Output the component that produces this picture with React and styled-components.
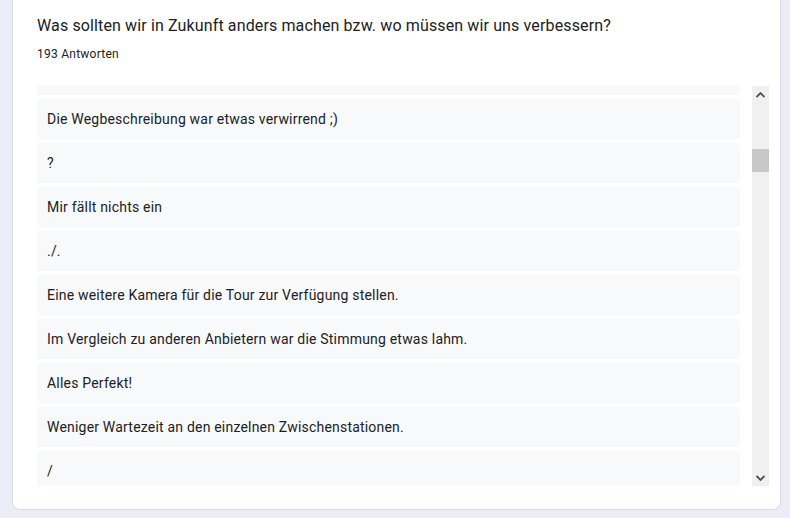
import React from "react";
import styled, { createGlobalStyle } from "styled-components";

// first entry is scrolled mostly out of view, only its bottom edge shows
const answers = [
  "",
  "Die Wegbeschreibung war etwas verwirrend ;)",
  "?",
  "Mir fällt nichts ein",
  "./.",
  "Eine weitere Kamera für die Tour zur Verfügung stellen.",
  "Im Vergleich zu anderen Anbietern war die Stimmung etwas lahm.",
  "Alles Perfekt!",
  "Weniger Wartezeit an den einzelnen Zwischenstationen.",
  "/",
];

function App() {
  return (
    <>
      <GlobalStyle />
      <Page>
        <Card>
          <Title>Was sollten wir in Zukunft anders machen bzw. wo müssen wir uns verbessern?</Title>
          <Count>193 Antworten</Count>
          <ScrollArea>
            <Viewport>
              <List>
                {answers.map((text, i) => (
                  <Answer key={i}>{text}</Answer>
                ))}
              </List>
            </Viewport>
            <Scrollbar>
              <ArrowButton>
                <svg width="9" height="6" viewBox="0 0 9 6">
                  <path d="M0.5 5 L4.5 1 L8.5 5" fill="none" stroke="#505050" strokeWidth="1.8" />
                </svg>
              </ArrowButton>
              <Track>
                <Thumb offset={46} size={23} />
              </Track>
              <ArrowButton>
                <svg width="9" height="6" viewBox="0 0 9 6">
                  <path d="M0.5 1 L4.5 5 L8.5 1" fill="none" stroke="#505050" strokeWidth="1.8" />
                </svg>
              </ArrowButton>
            </Scrollbar>
          </ScrollArea>
        </Card>
      </Page>
    </>
  );
}

const GlobalStyle = createGlobalStyle`
  body {
    margin: 0;
    background: #eaedf7;
    font-family: Roboto, "Liberation Sans", sans-serif;
  }
`;

const Page = styled.div`
  padding: 0 9px 8px 12px;
`;

const Card = styled.div`
  background: #fff;
  border: 1px solid #dadce0;
  border-top: none;
  border-radius: 0 0 8px 8px;
  padding: 14px 11px 24px 24px;
  height: 510px;
  box-sizing: border-box;
  display: flex;
  flex-direction: column;
`;

const Title = styled.div`
  font-size: 16px;
  line-height: 24px;
  letter-spacing: 0.13px;
  color: #202124;
`;

const Count = styled.div`
  font-size: 12px;
  line-height: 16px;
  letter-spacing: 0.25px;
  color: #202124;
  margin-top: 8px;
`;

const ScrollArea = styled.div`
  margin-top: 24px;
  height: 400px;
  display: flex;
  gap: 12px;
`;

const Viewport = styled.div`
  flex: 1;
  overflow: hidden;
`;

const List = styled.div`
  display: flex;
  flex-direction: column;
  gap: 4px;
  margin-top: -31px;
`;

const Answer = styled.div`
  height: 40px;
  flex-shrink: 0;
  display: flex;
  align-items: center;
  padding: 0 10px;
  background: #f8f9fa;
  border-radius: 4px;
  font-size: 14px;
  letter-spacing: 0.2px;
  color: #202124;
`;

const Scrollbar = styled.div`
  width: 17px;
  background: #f0f0f0;
  display: flex;
  flex-direction: column;
`;

const ArrowButton = styled.div`
  height: 17px;
  display: flex;
  align-items: center;
  justify-content: center;
`;

const Track = styled.div`
  flex: 1;
`;

const Thumb = styled.div`
  margin-top: ${(p) => p.offset}px;
  height: ${(p) => p.size}px;
  background: #c8c8c8;
`;

export default App;
